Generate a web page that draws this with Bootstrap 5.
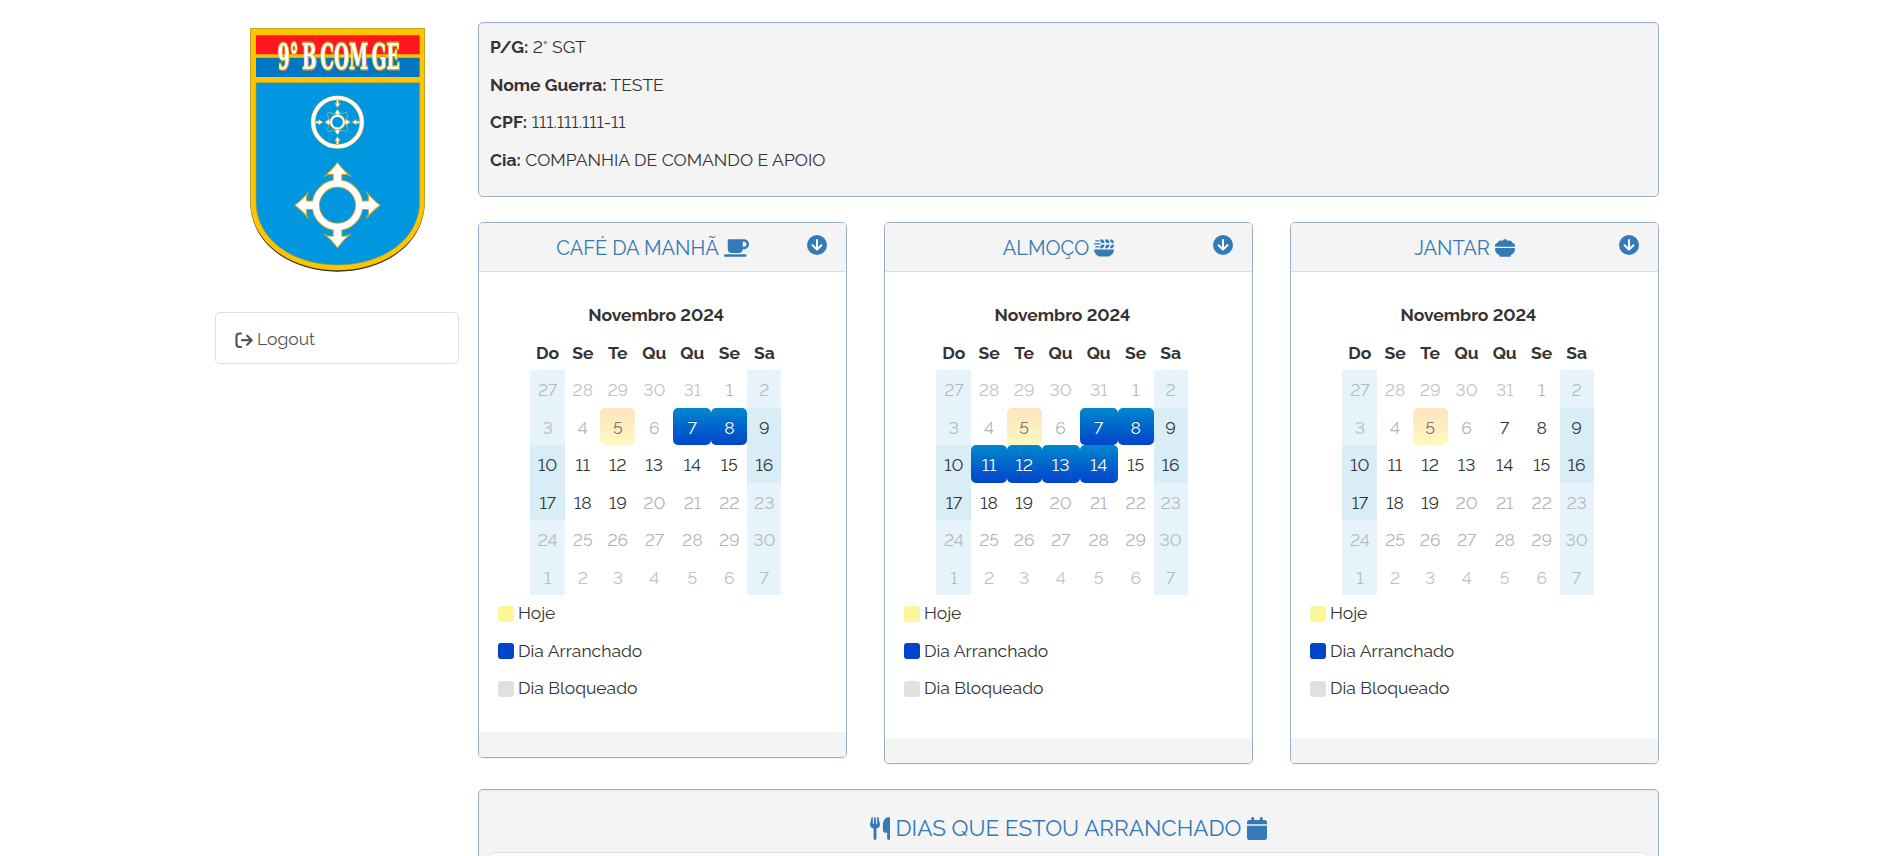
<!DOCTYPE html>
<html lang="pt-BR">
<head>
<meta charset="utf-8">
<meta name="viewport" content="width=device-width, initial-scale=1">
<title>Arranchamento</title>
<link href="https://cdn.jsdelivr.net/npm/bootstrap@5.3.0/dist/css/bootstrap.min.css" rel="stylesheet">
<style>
  body { font-family: Raleway, Lato, sans-serif; font-variant-numeric: lining-nums; font-size: 17.5px; line-height: 25px; color: #333; background: #fff; }
  .page-wrap { width: 1463px; margin-left: 205px; padding-top: 22px; height: 856px; overflow: hidden; }
  .side-col { width: 264px; padding: 0 10px; flex: none; }
  .main-col { width: 1181px; margin-left: 9px; flex: none; }
  .crest { width: 175px; height: 244px; margin: 6px 0 0 35px; display: block; }
  .side-link { margin-top: 40px; height: 52px; border: 1px solid #ddd; border-radius: 5px; padding: 3px 19px 0; color: #555; }
  .side-link svg { width: 18px; height: 18px; margin-right: 4px; }
  .box { border: 1px solid #9bb0cc; border-radius: 5px; background: #fff; box-shadow: 0 1px 1px rgba(0,0,0,.05); overflow: hidden; }
  .tinted { background: #f4f4f4; box-shadow: inset 0 1px 1px rgba(0,0,0,.05); }
  .info-box { height: 175px; padding: 12.4px 11px 0; }
  .info-box p { margin: 0 0 12.5px; }
  .meals { margin-top: 25px; gap: 37px; height: 543px; }
  .meal { width: 369px; flex: none; }
  .meal-head { height: 49px; background: #f4f4f4; border-bottom: 1px solid #ddd; padding: 0 19px; color: #337ab7; font-size: 20px; }
  .meal-head .title-row { padding-top: 2px; }
  .meal-head .go { width: 20px; height: 20px; margin-top: 11.500px; }
  .meal-head .ico { width: 20px; height: 20px; margin-left: 5px; }
  .meal-head .ico.wide { width: 25px; }
  .meal-body { padding: 23px 18px 24.5px; height: 460px; }
  .meal-body.tall { height: 466px; }
  .meal-foot { height: 25px; background: #f4f4f4; }
  .cal { display: grid; grid-template-columns: 35.2px 35.2px 34.9px 38.1px 38px 36px 33.9px; grid-auto-rows: 37.5px; margin-left: 33px; width: 251.3px; text-align: center; line-height: 41px; }
  .tall .cal { margin-left: 33.3px; }
  .month-name { grid-column: 1 / -1; font-weight: 700; padding-left: 1px; }
  .dow { font-weight: 700; }
  .off { color: #b4b4b4; }
  .far { color: #c2c2c2; }
  .wknd { background: #d9edf7; }
  .wknd.off { background: #e7f3fa; color: #b4bbbf; }
  .now { background: linear-gradient(#fee4c0, #fff8c0); border-radius: 5px; color: #777; }
  .picked { background: linear-gradient(#08c, #04c); border-radius: 5px; color: #fff; text-shadow: 0 -1px 0 rgba(0,0,0,.25); }
  .key-list { padding-top: 6px; }
  .key-list div { height: 25px; margin-bottom: 12.5px; }
  .swatch { width: 16px; height: 16px; border-radius: 3px; margin: 0 4px 0 1px; }
  .days-box { margin-top: 24px; height: 120px; padding: 0 11px; }
  .days-box h3 { font-size: 22.5px; font-weight: 400; color: #337ab7; margin: 0; height: 62px; padding-top: 14px; line-height: 1; gap: 6px; }
  .days-box h3 svg { height: 23px; width: 20px; }
  .days-list { border: 1px solid #ddd; border-radius: 5px; background: #fff; height: 60px; }
  svg { flex: none; }
</style>
</head>
<body>
<svg class="d-none" xmlns="http://www.w3.org/2000/svg">
  <symbol id="i-down" viewBox="0 0 20 20"><circle cx="10" cy="10" r="10" fill="#337ab7"/><path d="M10 5v9.2M5.6 10.2 10 14.6l4.4-4.400" fill="none" stroke="#fff" stroke-width="2" stroke-linecap="round" stroke-linejoin="round"/></symbol>
  <symbol id="i-cup" viewBox="0 0 640 512"><path fill="#337ab7" d="M96 64c0-17.700 14.300-32 32-32H512c70.700 0 128 57.300 128 128s-57.300 128-128 128H480c0 53-43 96-96 96H192c-53 0-96-43-96-96V64zM480 224h32c35.300 0 64-28.700 64-64s-28.700-64-64-64H480V224zM32 416H544c17.700 0 32 14.300 32 32s-14.300 32-32 32H32c-17.700 0-32-14.300-32-32s14.300-32 32-32z"/></symbol>
  <symbol id="i-wheat" viewBox="0 0 20 20"><g fill="#337ab7"><path d="M0 11.500H20C20 14.500 18 17 15.600 18V18.500H4.400V18C2 17 0 14.500 0 11.500Z"/><path d="M6 1.500h2.500q2 .6 2 3.500H8.300Q6 4.500 6 1.500ZM11 1.500h2.500q2 .6 2 3.500h-2.200Q11 4.500 11 1.500ZM16 1.500h1.500q2.500.6 2.500 3.500h-1.700Q16 4.500 16 1.500ZM6 10.300q0-3 2.300-3.800h2.200q0 3-2.200 3.800ZM11 10.300q0-3 2.300-3.800h2.200q0 3-2.200 3.800ZM16 10.300q0-3 2.300-3.800H20q0 3-2 3.800Z"/></g><path d="M0 5.800h6M1.800 2.800H5M1.800 8.800H5" stroke="#337ab7" stroke-width="1.300" stroke-linecap="round"/></symbol>
  <symbol id="i-bowl" viewBox="0 0 512 512"><path fill="#337ab7" d="M0 192c0-35.300 28.700-64 64-64c.5 0 1.100 0 1.600 0C73 91.500 105.300 64 144 64c15 0 29 4.100 40.900 11.200C198.200 49.600 225.100 32 256 32s57.800 17.600 71.100 43.200C339 68.100 353 64 368 64c38.700 0 71 27.500 78.400 64c.5 0 1.100 0 1.600 0c35.300 0 64 28.700 64 64c0 11.700-3.100 22.600-8.600 32H8.600C3.100 214.600 0 203.700 0 192zm0 91.400C0 268.300 12.300 256 27.400 256H484.600c15.100 0 27.400 12.300 27.400 27.400c0 70.500-44.400 130.700-106.700 154.100L403.500 452c-2 16-15.600 28-31.800 28H140.200c-16.100 0-29.800-12-31.800-28l-1.800-14.400C44.400 414.100 0 353.900 0 283.400z"/></symbol>
  <symbol id="i-fork" viewBox="0 0 448 512"><path fill="#337ab7" d="M416 0C400 0 288 32 288 176V288c0 35.300 28.700 64 64 64h32V480c0 17.700 14.300 32 32 32s32-14.300 32-32V352 240 32c0-17.700-14.300-32-32-32zM64 16C64 7.800 57.900 1 49.700 .1S34.200 4.600 32.400 12.500L2.100 148.800C.7 155.100 0 161.500 0 167.900c0 45.900 35.100 83.600 80 87.700V480c0 17.700 14.300 32 32 32s32-14.300 32-32V255.600c44.900-4.100 80-41.800 80-87.700c0-6.400-.7-12.800-2.100-19.100L191.600 12.500c-1.800-8-9.300-13.300-17.400-12.400S160 7.800 160 16V150.200c0 5.400-4.400 9.800-9.800 9.800c-5.100 0-9.300-3.900-9.800-9L127.900 14.600C127.200 6.300 120.300 0 112 0s-15.200 6.300-15.900 14.600L83.700 151c-.5 5.100-4.700 9-9.800 9c-5.400 0-9.800-4.400-9.800-9.800V16z"/></symbol>
  <symbol id="i-date" viewBox="0 0 448 512"><path fill="#337ab7" d="M96 32V64H48C21.500 64 0 85.500 0 112v48H448V112c0-26.500-21.500-48-48-48H352V32c0-17.700-14.300-32-32-32s-32 14.300-32 32V64H160V32c0-17.700-14.300-32-32-32S96 14.300 96 32zM448 192H0V464c0 26.500 21.500 48 48 48H400c26.500 0 48-21.500 48-48V192z"/></symbol>
</svg>

<div class="page-wrap d-flex align-items-start">
  <aside class="side-col">
    <svg class="crest" viewBox="136 53 524 731" preserveAspectRatio="none">
      <defs>
        <g id="big-arm"><path d="M385 514V492Q370 489 357 498Q378 483 398 456Q418 483 439 498Q426 489 411 492V514"/></g>
        <g id="tiny-arm"><path d="M394 316V310H389L398 297 407 310H402V316Z"/></g>
        <g id="in-arm"><path d="M395 268V279H390L398 291 406 279H401V268Z"/></g>
      </defs>
      <path d="M137 54H659V573C659 703 535 783 398 783S137 703 137 573Z" fill="#222"/>
      <path d="M137 54H659V572C659 698 535 779 398 779S137 698 137 572Z" fill="#ffc400" stroke="#b39b35" stroke-width="1"/>
      <path d="M154 217H644V572C644 691 527 763 398 763S154 691 154 572Z" fill="#0097e0" stroke="#a99a3a" stroke-width="2"/>
      <path d="M154 75H644V132H154Z" fill="#ff1720"/>
      <path d="M154 142H644V200H154Z" fill="#0077c5"/>
      <text x="219" y="176" textLength="365" lengthAdjust="spacingAndGlyphs" font-family="DejaVu Serif, serif" font-weight="bold" font-size="107" fill="#fff" stroke="#c9a227" stroke-width="9" paint-order="stroke" stroke-linejoin="round" word-spacing="-14">9° B COM GE</text>
      <g stroke="#c9b04a" stroke-width="2" fill="#fff">
        <circle cx="398" cy="335" r="73" fill="none" stroke="#d5bd5c" stroke-width="14"/>
        <circle cx="398" cy="335" r="73" fill="none" stroke="#fff" stroke-width="11"/>
        <path d="M372 306Q398 316 424 306Q431 308 429 316Q418 335 429 354Q431 363 422 364Q398 352 374 364Q367 363 368 355Q378 335 368 314Q367 308 372 306Z" fill="none" stroke-width="2.500"/>
        <use href="#in-arm"/><use href="#in-arm" transform="rotate(90 398 335)"/><use href="#in-arm" transform="rotate(180 398 335)"/><use href="#in-arm" transform="rotate(270 398 335)"/>
        <use href="#tiny-arm"/><use href="#tiny-arm" transform="rotate(90 398 335)"/><use href="#tiny-arm" transform="rotate(180 398 335)"/><use href="#tiny-arm" transform="rotate(270 398 335)"/>
        <circle cx="398" cy="335" r="19" fill="none" stroke="#c9b04a" stroke-width="9"/>
        <circle cx="398" cy="335" r="19" fill="#0097e0" stroke="#fff" stroke-width="6"/>
      </g>
      <circle cx="398" cy="584" r="65" fill="none" stroke="#c9a227" stroke-width="25"/>
      <g fill="#fff" stroke="#c9a227" stroke-width="3">
        <use href="#big-arm"/><use href="#big-arm" transform="rotate(90 398 584)"/><use href="#big-arm" transform="rotate(180 398 584)"/><use href="#big-arm" transform="rotate(270 398 584)"/>
      </g>
      <circle cx="398" cy="584" r="65" fill="none" stroke="#fff" stroke-width="19"/>
    </svg>
    <div class="side-link d-flex align-items-center">
      <svg viewBox="0 0 18 18" fill="none" stroke="#555" stroke-width="2.200" stroke-linecap="round" stroke-linejoin="round"><path d="M6 2.500H4.500Q1.500 2.500 1.500 5.500V13Q1.500 16 4.500 16H6M7 9.200h9.500M12.200 4.700l4.500 4.500-4.500 4.500"/></svg>
      <span>Logout</span>
    </div>
  </aside>

  <main class="main-col">
    <section class="box tinted info-box">
      <p><b>P/G:</b> 2° SGT</p>
      <p><b>Nome Guerra:</b> TESTE</p>
      <p><b>CPF:</b> 111.111.111-11</p>
      <p><b>Cia:</b> COMPANHIA DE COMANDO E APOIO</p>
    </section>

    <div class="meals d-flex align-items-start" id="meals"></div>

    <section class="box tinted days-box">
      <h3 class="d-flex justify-content-center align-items-center"><svg><use href="#i-fork"/></svg><span>DIAS QUE ESTOU ARRANCHADO</span><svg><use href="#i-date"/></svg></h3>
      <div class="days-list"></div>
    </section>
  </main>
</div>

<script>
  const meals = [
    { name: 'CAFÉ DA MANHÃ', icon: 'i-cup', wide: true, picked: [7, 8], tall: false },
    { name: 'ALMOÇO', icon: 'i-wheat', picked: [7, 8, 11, 12, 13, 14], tall: true },
    { name: 'JANTAR', icon: 'i-bowl', picked: [], tall: true }
  ];
  function calendar(picked) {
    let html = '<div class="month-name">Novembro 2024</div>';
    html += ['Do', 'Se', 'Te', 'Qu', 'Qu', 'Se', 'Sa'].map(d => `<div class="dow">${d}</div>`).join('');
    for (let i = 0; i < 42; i++) {
      const n = i - 4;                       // day of November
      const label = n < 1 ? 31 + n : n > 30 ? n - 30 : n;
      const cls = [];
      if (n < 7 || n > 19) cls.push('off');
      if (n < 1 || n > 30) cls.push('far');
      if (i % 7 === 0 || i % 7 === 6) cls.push('wknd');
      if (n === 5) cls.push('now');
      if (picked.includes(n)) cls.push('picked');
      html += `<div class="${cls.join(' ')}">${label}</div>`;
    }
    return `<div class="cal">${html}</div>`;
  }
  const key = [['#fdf59a', 'Hoje'], ['#04c', 'Dia Arranchado'], ['#e0e0e0', 'Dia Bloqueado']]
    .map(k => `<div class="d-flex align-items-center"><span class="swatch" style="background:${k[0]}"></span>${k[1]}</div>`).join('');
  document.getElementById('meals').innerHTML = meals.map(m => `
    <section class="box meal">
      <div class="meal-head d-flex">
        <div class="title-row flex-fill d-flex align-items-center justify-content-center">
          <span>${m.name}</span><svg class="ico ${m.wide ? 'wide' : ''}"><use href="#${m.icon}"/></svg>
        </div>
        <svg class="go"><use href="#i-down"/></svg>
      </div>
      <div class="meal-body ${m.tall ? 'tall' : ''}">${calendar(m.picked)}<div class="key-list">${key}</div></div>
      <div class="meal-foot"></div>
    </section>`).join('');
</script>
<script src="https://cdn.jsdelivr.net/npm/bootstrap@5.3.0/dist/js/bootstrap.bundle.min.js"></script>
</body>
</html>
